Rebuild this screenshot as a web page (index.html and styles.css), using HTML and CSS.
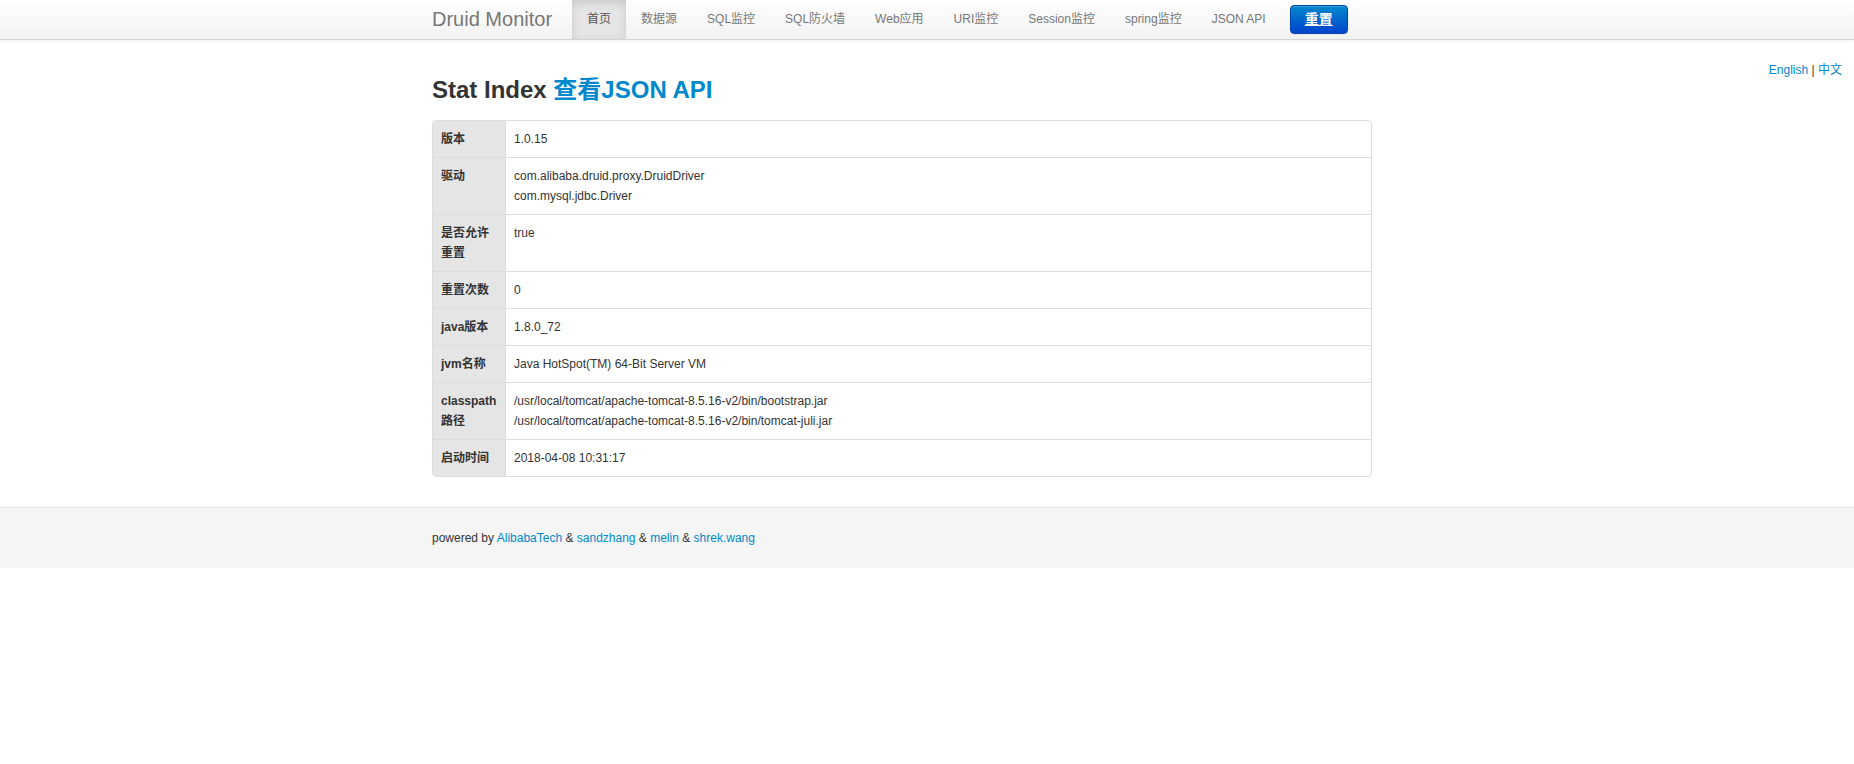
FILE: index.html
```html
<!DOCTYPE html>
<html lang="zh">
<head>
<meta charset="utf-8">
<title>Druid Stat Index</title>
<link rel="stylesheet" href="styles.css">
</head>
<body>
<div class="navbar">
  <div class="container nav-inner">
    <a class="brand" href="#">Druid Monitor</a>
    <ul class="nav">
      <li class="active"><a href="#">首页</a></li>
      <li><a href="#">数据源</a></li>
      <li><a href="#">SQL监控</a></li>
      <li><a href="#">SQL防火墙</a></li>
      <li><a href="#">Web应用</a></li>
      <li><a href="#">URI监控</a></li>
      <li><a href="#">Session监控</a></li>
      <li><a href="#">spring监控</a></li>
      <li><a href="#">JSON API</a></li>
    </ul>
    <a class="btn-primary" href="#">重置</a>
  </div>
</div>

<div class="page">
  <div class="lang"><a href="#">English</a> | <a href="#">中文</a></div>
  <div class="container">
    <h2 class="title">Stat Index <a href="#">查看JSON API</a></h2>
    <table class="stat-table">
      <tr><th>版本</th><td>1.0.15</td></tr>
      <tr><th>驱动</th><td>com.alibaba.druid.proxy.DruidDriver<br>com.mysql.jdbc.Driver</td></tr>
      <tr><th>是否允许重置</th><td>true</td></tr>
      <tr><th>重置次数</th><td>0</td></tr>
      <tr><th>java版本</th><td>1.8.0_72</td></tr>
      <tr><th>jvm名称</th><td>Java HotSpot(TM) 64-Bit Server VM</td></tr>
      <tr><th>classpath路径</th><td>/usr/local/tomcat/apache-tomcat-8.5.16-v2/bin/bootstrap.jar<br>/usr/local/tomcat/apache-tomcat-8.5.16-v2/bin/tomcat-juli.jar</td></tr>
      <tr><th>启动时间</th><td>2018-04-08 10:31:17</td></tr>
    </table>
  </div>
</div>

<div class="footer">
  <div class="container">
    powered by <a href="#">AlibabaTech</a> &amp; <a href="#">sandzhang</a> &amp; <a href="#">melin</a> &amp; <a href="#">shrek.wang</a>
  </div>
</div>
</body>
</html>
```
FILE: styles.css
```css
html, body {
  margin: 0;
  padding: 0;
}
body {
  font-family: "Liberation Sans", Arial, "Noto Sans CJK SC", sans-serif;
  font-size: 12px;
  line-height: 20px;
  color: #333;
  background: #fff;
}
a {
  color: #0088cc;
  text-decoration: none;
}
.container {
  width: 940px;
  margin-left: calc(50% - 495px);
}

/* navbar */
.navbar {
  height: 39px;
  background: linear-gradient(to bottom, #ffffff, #f2f2f2);
  border-bottom: 1px solid #d4d4d4;
  box-shadow: 0 1px 4px rgba(0, 0, 0, 0.065);
}
.nav-inner {
  display: flex;
  align-items: center;
  height: 39px;
}
.brand {
  font-size: 20px;
  line-height: 39px;
  color: #777;
  padding-right: 20px;
}
.nav {
  display: flex;
  list-style: none;
  margin: 0;
  padding: 0;
  height: 39px;
}
.nav li a {
  display: block;
  padding: 0 15px;
  line-height: 39px;
  color: #777;
  font-size: 12px;
}
.nav li.active a {
  background: #e5e5e5;
  color: #555;
  box-shadow: inset 0 3px 8px rgba(0, 0, 0, 0.125);
}
.btn-primary {
  display: block;
  margin-left: 9px;
  width: 58px;
  height: 29px;
  box-sizing: border-box;
  text-align: center;
  line-height: 27px;
  font-size: 14px;
  font-weight: bold;
  color: #fff;
  text-decoration: underline;
  background: linear-gradient(to bottom, #0088cc, #0044cc);
  border: 1px solid #0044aa;
  border-radius: 4px;
  box-shadow: inset 0 1px 0 rgba(255, 255, 255, 0.2), 0 1px 2px rgba(0, 0, 0, 0.05);
}

/* page */
.page {
  padding-top: 20px;
}
.lang {
  float: right;
  margin-right: 12px;
  line-height: 20px;
}
.title {
  margin: 15px 0 15px;
  font-size: 24px;
  line-height: 30px;
  font-weight: bold;
  color: #333;
}
.stat-table {
  width: 100%;
  border-collapse: separate;
  border-spacing: 0;
  border: 1px solid #ddd;
  border-radius: 4px;
}
.stat-table th,
.stat-table td {
  padding: 8px;
  line-height: 20px;
  text-align: left;
  vertical-align: top;
  border-top: 1px solid #ddd;
}
.stat-table tr:first-child th,
.stat-table tr:first-child td {
  border-top: 0;
}
.stat-table th {
  width: 56px;
  background: #e5e5e5;
  font-weight: bold;
}
.stat-table tr:first-child th {
  border-top-left-radius: 4px;
}
.stat-table tr:last-child th {
  border-bottom-left-radius: 4px;
}
.stat-table td {
  border-left: 1px solid #ddd;
}

/* footer */
.footer {
  margin-top: 30px;
  border-top: 1px solid #e5e5e5;
  background: #f5f5f5;
  padding: 20px 0;
  line-height: 20px;
}
```
